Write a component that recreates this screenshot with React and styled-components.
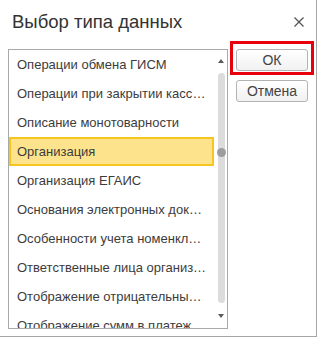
import React from 'react';
import styled, { createGlobalStyle } from 'styled-components';

const GlobalStyle = createGlobalStyle`
    body {
        margin: 0;
        background: #fff;
        font-family: "Liberation Sans", Arial, sans-serif;
    }
`;

const Window = styled.div`
    width: 317px;
    height: 337px;
    box-sizing: border-box;
    border-right: 1px solid #a6a6a6;
    border-bottom: 1px solid #a6a6a6;
    background: #fff;
    display: flex;
    flex-direction: column;
`;

const Header = styled.div`
    height: 49px;
    box-sizing: border-box;
    padding: 0 11px 6px 12px;
    display: flex;
    align-items: center;
    justify-content: space-between;
`;

const Title = styled.h1`
    margin: 0;
    font-size: 18.5px;
    font-weight: normal;
    color: #333;
`;

const Close = styled.button`
    width: 12px;
    height: 12px;
    padding: 0;
    border: 0;
    background: none;
    display: flex;
    align-items: center;
    justify-content: center;
`;

const Body = styled.div`
    display: flex;
    padding-left: 8px;
`;

const List = styled.div`
    width: 220px;
    height: 280px;
    box-sizing: border-box;
    border: 1px solid #a9a9a9;
    display: flex;
    overflow: hidden;
`;

const Rows = styled.div`
    flex: 1;
    min-width: 0;
    overflow: hidden;
`;

const Row = styled.div`
    height: 29px;
    box-sizing: border-box;
    padding: 0 6px 0 ${props => (props.selected ? '6px' : '8px')};
    display: flex;
    align-items: center;
    font-size: 13px;
    color: #3c3c3c;
    background: ${props => (props.selected ? '#fde48c' : 'transparent')};
    border: ${props => (props.selected ? '2px solid #f6c51f' : '0')};
`;

const RowText = styled.span`
    white-space: nowrap;
    overflow: hidden;
    text-overflow: ellipsis;
`;

const Scroll = styled.div`
    width: 13px;
    display: flex;
    flex-direction: column;
    align-items: center;
    padding-top: 9px;
`;

const Arrow = styled.div`
    width: 0;
    height: 0;
    border-left: 3px solid transparent;
    border-right: 3px solid transparent;
    ${props =>
        props.down
            ? 'border-top: 4px solid #5a5a5a;'
            : 'border-bottom: 4px solid #5a5a5a;'}
    margin-left: 1px;
`;

const Track = styled.div`
    width: 7px;
    height: 230px;
    margin: 10px 0 11px 1px;
    border-radius: 4px;
    background: #dcdcdc;
    display: flex;
    justify-content: center;
`;

const Thumb = styled.div`
    width: 9px;
    height: 9px;
    flex-shrink: 0;
    margin-top: 75px;
    border-radius: 50%;
    background: #9d9d9d;
`;

const Side = styled.div`
    display: flex;
    flex-direction: column;
    gap: 9px;
    margin-left: 8px;
`;

const Marked = styled.div`
    position: relative;
    &::after {
        content: '';
        position: absolute;
        top: -8px;
        left: -6px;
        right: -6px;
        bottom: -4px;
        border: 3px solid #e8000b;
        pointer-events: none;
    }
`;

const Button = styled.button`
    width: 72px;
    height: 22px;
    box-sizing: border-box;
    padding: 0;
    border: 1px solid #b3b3b3;
    border-radius: 3px;
    background: linear-gradient(#ffffff, #f1f1f1);
    font-family: "Liberation Sans", Arial, sans-serif;
    font-size: 14px;
    color: #444;
`;

const items = [
    'Операции обмена ГИСМ',
    'Операции при закрытии кассовой смены',
    'Описание монотоварности',
    'Организация',
    'Организация ЕГАИС',
    'Основания электронных документов',
    'Особенности учета номенклатуры',
    'Ответственные лица организаций',
    'Отображение отрицательных значений',
    'Отображение сумм в платежных документах',
];

const CloseIcon = () => (
    <svg width="10" height="10" viewBox="0 0 10 10">
        <path d="M0.5 0.5 L9.5 9.5 M9.5 0.5 L0.5 9.5" stroke="#555" strokeWidth="1.3" />
    </svg>
);

const App = () => (
    <>
        <GlobalStyle />
        <Window>
            <Header>
                <Title>Выбор типа данных</Title>
                <Close aria-label="Закрыть">
                    <CloseIcon />
                </Close>
            </Header>
            <Body>
                <List>
                    <Rows>
                        {items.map(item => (
                            <Row key={item} selected={item === 'Организация'}>
                                <RowText>{item}</RowText>
                            </Row>
                        ))}
                    </Rows>
                    <Scroll>
                        <Arrow />
                        <Track>
                            <Thumb />
                        </Track>
                        <Arrow down />
                    </Scroll>
                </List>
                <Side>
                    <Marked>
                        <Button>ОК</Button>
                    </Marked>
                    <Button>Отмена</Button>
                </Side>
            </Body>
        </Window>
    </>
);

export default App;
